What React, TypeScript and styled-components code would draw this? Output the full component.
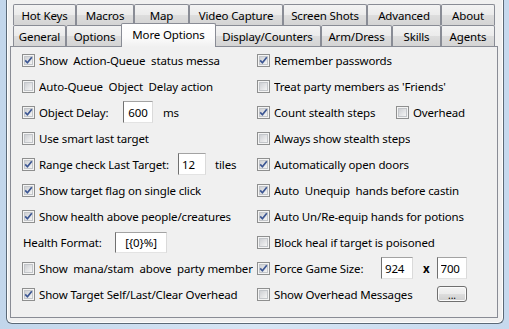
import React from 'react';
import styled, { createGlobalStyle } from 'styled-components';

const GlobalStyle = createGlobalStyle`
    html, body {
        margin: 0;
        padding: 0;
    }
    body {
        width: 509px;
        height: 329px;
        overflow: hidden;
        background: linear-gradient(90deg, #c2d6eb 0%, #d7e5f4 50%, #c6d9ee 100%);
        font-family: "Noto Sans", "Segoe UI", sans-serif;
        font-size: 11.5px;
        letter-spacing: -0.15px;
        color: #000;
    }
`;

// window client area with its aero frame edge
const Window = styled.div`
    box-sizing: border-box;
    height: 324px;
    margin: 0 5px 0 6px;
    padding: 4px 5px 5px 3px;
    border: 1px solid #5b6977;
    border-top: none;
    border-radius: 0 0 6px 6px;
    background: #f0f0f0;
    box-shadow: inset 1px 0 0 #fdfdfd, inset -1px 0 0 #fdfdfd, inset 0 -1px 0 #fdfdfd;
    display: flex;
    flex-direction: column;
`;

const TabStrip = styled.div`
    display: flex;
    flex-direction: column;
    padding-left: 3px;
`;

const TabRow = styled.div`
    display: flex;
    height: 21px;
`;

const Tab = styled.div<{ $width: number; $selected?: boolean }>`
    box-sizing: border-box;
    width: ${({ $width, $selected }) => ($selected ? $width + 4 : $width)}px;
    display: flex;
    align-items: center;
    justify-content: center;
    border: 1px solid #898c95;
    border-bottom: none;
    border-radius: 2px 2px 0 0;
    white-space: nowrap;
    background: linear-gradient(180deg, #f3f3f3 0%, #ebebeb 50%, #dddddd 51%, #d4d4d4 100%);
    ${({ $selected }) => $selected && `
        position: relative;
        z-index: 2;
        margin: -2px -2px -1px;
        height: 24px;
        padding-bottom: 2px;
        background: linear-gradient(180deg, #ffffff 0%, #fbfbfb 60%, #f0f0f0 100%);
    `}
`;

const Panel = styled.div`
    flex: 1;
    box-sizing: border-box;
    border: 1px solid #898c95;
    background: #f0f0f0;
    padding-left: 11px;
    display: grid;
    grid-template-columns: 235px 1fr;
    grid-template-rows: repeat(10, 26px);
    grid-auto-flow: column;
`;

const Row = styled.div`
    display: flex;
    align-items: center;
    white-space: pre;
`;

const Text = styled.span<{ $width?: number; $indent?: number }>`
    margin-left: ${({ $indent }) => ($indent ?? 4)}px;
    ${({ $width }) => $width !== undefined && `width: ${$width}px; flex: none;`}
    white-space: pre;
    overflow: hidden;
`;

const Field = styled.input<{ $width: number; $height?: number; $center?: boolean }>`
    box-sizing: border-box;
    width: ${({ $width }) => $width}px;
    height: ${({ $height }) => $height ?? 22}px;
    flex: none;
    margin: 0;
    padding: 0 3px;
    font: inherit;
    letter-spacing: inherit;
    color: #000;
    background: #fff;
    text-align: ${({ $center }) => ($center ? 'center' : 'left')};
    border-style: solid;
    border-width: 1px;
    border-color: #a3a3a3 #dadada #e3e3e3 #707070;
    outline: none;
`;

const Unit = styled.span<{ $gap: number; $bold?: boolean }>`
    margin-left: ${({ $gap }) => $gap}px;
    font-weight: ${({ $bold }) => ($bold ? 700 : 400)};
`;

const SmallButton = styled.div`
    box-sizing: border-box;
    width: 30px;
    height: 16px;
    border: 1px solid #707070;
    border-radius: 3px;
    background: linear-gradient(180deg, #f4f4f4 0%, #ebebeb 50%, #dddddd 51%, #cfcfcf 100%);
    box-shadow: inset 0 0 0 1px #fbfbfb;
    display: flex;
    align-items: flex-end;
    justify-content: center;
    font-size: 10px;
    line-height: 12px;
    letter-spacing: 0;
`;

const BoxSvg = styled.svg`
    flex: none;
    display: block;
`;

const Check: React.FC<{ on?: boolean }> = ({ on }) => (
    <BoxSvg width="13" height="13" viewBox="0 0 13 13">
        <defs>
            <linearGradient id="cbg" x1="0" y1="0" x2="1" y2="1">
                <stop offset="0" stopColor="#cbcdd1" />
                <stop offset="1" stopColor="#f7f7f7" />
            </linearGradient>
        </defs>
        <rect x="0.5" y="0.5" width="12" height="12" fill="#f4f4f4" stroke="#8e8f8f" />
        <rect x="2.5" y="2.5" width="8" height="8" fill="url(#cbg)" stroke="#c3c6ca" />
        {on && (
            <path d="M3.2 6.4 L5.4 8.8 L9.8 3.2" fill="none" stroke="#3c5693" strokeWidth="1.7" strokeLinejoin="round" />
        )}
    </BoxSvg>
);

const row1 = [
    { label: 'Hot Keys', w: 63 },
    { label: 'Macros', w: 58 },
    { label: 'Map', w: 55 },
    { label: 'Video Capture', w: 94 },
    { label: 'Screen Shots', w: 84 },
    { label: 'Advanced', w: 74 },
    { label: 'About', w: 54 },
];

const row2 = [
    { label: 'General', w: 53 },
    { label: 'Options', w: 57 },
    { label: 'More Options', w: 91, selected: true },
    { label: 'Display/Counters', w: 107 },
    { label: 'Arm/Dress', w: 71 },
    { label: 'Skills', w: 49 },
    { label: 'Agents', w: 54 },
];

const App: React.FC = () => (
    <>
        <GlobalStyle />
        <Window>
            <TabStrip>
                <TabRow>
                    {row1.map(t => (
                        <Tab key={t.label} $width={t.w}>{t.label}</Tab>
                    ))}
                </TabRow>
                <TabRow>
                    {row2.map(t => (
                        <Tab key={t.label} $width={t.w} $selected={t.selected}>{t.label}</Tab>
                    ))}
                </TabRow>
            </TabStrip>
            <Panel>
                {/* left column */}
                <Row><Check on /><Text>{'Show  Action-Queue  status messa'}</Text></Row>
                <Row><Check /><Text>{'Auto-Queue  Object  Delay action'}</Text></Row>
                <Row>
                    <Check on /><Text $width={84}>Object Delay:</Text>
                    <Field $width={30} $center readOnly value="600" />
                    <Unit $gap={10}>ms</Unit>
                </Row>
                <Row><Check /><Text>Use smart last target</Text></Row>
                <Row>
                    <Check on /><Text $width={139}>Range check Last Target:</Text>
                    <Field $width={28} readOnly value="12" />
                    <Unit $gap={9}>tiles</Unit>
                </Row>
                <Row><Check on /><Text>Show target flag on single click</Text></Row>
                <Row><Check on /><Text>Show health above people/creatures</Text></Row>
                <Row>
                    <Text $indent={1} $width={92}>Health Format:</Text>
                    <Field $width={52} $height={21} $center readOnly value="[{0}%]" />
                </Row>
                <Row><Check /><Text>{'Show  mana/stam  above  party member'}</Text></Row>
                <Row><Check on /><Text>Show Target Self/Last/Clear Overhead</Text></Row>

                {/* right column */}
                <Row><Check on /><Text>Remember passwords</Text></Row>
                <Row><Check /><Text>Treat party members as 'Friends'</Text></Row>
                <Row>
                    <Check on /><Text $width={122}>Count stealth steps</Text>
                    <Check /><Text>Overhead</Text>
                </Row>
                <Row><Check /><Text>Always show stealth steps</Text></Row>
                <Row><Check on /><Text>Automatically open doors</Text></Row>
                <Row><Check on /><Text>{'Auto  Unequip  hands before castin'}</Text></Row>
                <Row><Check on /><Text>Auto Un/Re-equip hands for potions</Text></Row>
                <Row><Check /><Text>Block heal if target is poisoned</Text></Row>
                <Row>
                    <Check on /><Text $width={107}>Force Game Size:</Text>
                    <Field $width={32} readOnly value="924" />
                    <Unit $gap={10} $bold>x</Unit>
                    <Field $width={30} readOnly value="700" style={{ marginLeft: 7 }} />
                </Row>
                <Row>
                    <Check /><Text $width={163}>Show Overhead Messages</Text>
                    <SmallButton>...</SmallButton>
                </Row>
            </Panel>
        </Window>
    </>
);

export default App;
